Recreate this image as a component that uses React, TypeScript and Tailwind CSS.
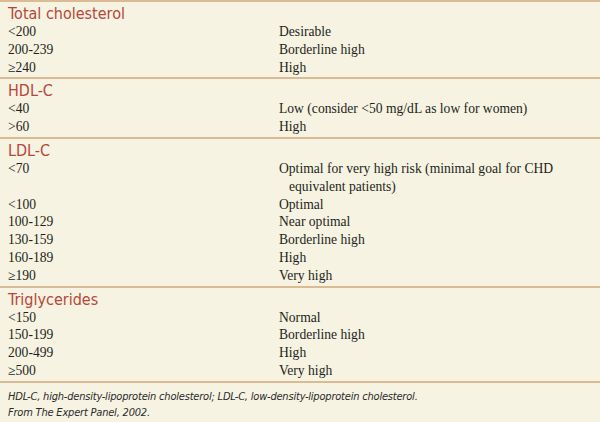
import React from "react";

type Row = { range: string; label: string };
type Section = { title: string; rows: Row[] };

const sections: Section[] = [
  {
    title: "Total cholesterol",
    rows: [
      { range: "<200", label: "Desirable" },
      { range: "200-239", label: "Borderline high" },
      { range: "≥240", label: "High" },
    ],
  },
  {
    title: "HDL-C",
    rows: [
      { range: "<40", label: "Low (consider <50 mg/dL as low for women)" },
      { range: ">60", label: "High" },
    ],
  },
  {
    title: "LDL-C",
    rows: [
      { range: "<70", label: "Optimal for very high risk (minimal goal for CHD equivalent patients)" },
      { range: "<100", label: "Optimal" },
      { range: "100-129", label: "Near optimal" },
      { range: "130-159", label: "Borderline high" },
      { range: "160-189", label: "High" },
      { range: "≥190", label: "Very high" },
    ],
  },
  {
    title: "Triglycerides",
    rows: [
      { range: "<150", label: "Normal" },
      { range: "150-199", label: "Borderline high" },
      { range: "200-499", label: "High" },
      { range: "≥500", label: "Very high" },
    ],
  },
];

const sans = "font-['Liberation_Sans_Narrow','DejaVu_Sans_Condensed',sans-serif]";

export default function App() {
  return (
    <div className="w-[600px] h-[422px] bg-[#f6f3e2] text-[#231f20] overflow-hidden">
      {sections.map((s) => (
        <section key={s.title} className="border-t-2 border-[#dbbb93] pt-[3px] pb-[1px]">
          <h2 className={`${sans} pl-2 text-[16px] leading-[18px] text-[#b5473b]`}>{s.title}</h2>
          {s.rows.map((r) => (
            <div
              key={r.range}
              className="grid grid-cols-[271px_1fr] pl-2 pr-[30px] font-['Liberation_Serif',serif] text-[13.6px] leading-[17.8px]"
            >
              <span>{r.range}</span>
              <span className="pl-[10px] -indent-[10px]">{r.label}</span>
            </div>
          ))}
        </section>
      ))}
      <footer className={`${sans} border-t-2 border-[#dbbb93] pt-[6px] pl-2 text-[11px] tracking-[-0.2px] leading-[16px] italic text-[#2a2a2a]`}>
        <p>HDL-C, high-density-lipoprotein cholesterol; LDL-C, low-density-lipoprotein cholesterol.</p>
        <p>From The Expert Panel, 2002.</p>
      </footer>
    </div>
  );
}
